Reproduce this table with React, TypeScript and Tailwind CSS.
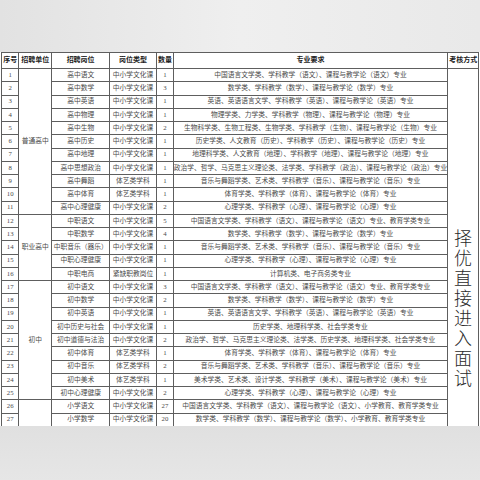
import React from "react";

type Row = [string, string, string, string];

const rows: Row[] = [
  ["高中语文", "中小学文化课", "1", "中国语言文学类、学科教学（语文）、课程与教学论（语文）专业"],
  ["高中数学", "中小学文化课", "3", "数学类、学科教学（数学）、课程与教学论（数学）专业"],
  ["高中英语", "中小学文化课", "1", "英语、英语语言文学、学科教学（英语）、课程与教学论（英语）专业"],
  ["高中物理", "中小学文化课", "1", "物理学类、力学类、学科教学（物理）、课程与教学论（物理）专业"],
  ["高中生物", "中小学文化课", "2", "生物科学类、生物工程类、生物学类、学科教学（生物）、课程与教学论（生物）专业"],
  ["高中历史", "中小学文化课", "1", "历史学类、人文教育（历史）、学科教学（历史）、课程与教学论（历史）专业"],
  ["高中地理", "中小学文化课", "1", "地理科学类、人文教育（地理）、学科教学（地理）、课程与教学论（地理）专业"],
  ["高中思想政治", "中小学文化课", "1", "政治学、哲学、马克思主义理论类、法学类、学科教学（政治）、课程与教学论（政治）专业"],
  ["高中舞蹈", "体艺类学科", "1", "音乐与舞蹈学类、艺术类、学科教学（音乐）、课程与教学论（音乐）专业"],
  ["高中体育", "体艺类学科", "1", "体育学类、学科教学（体育）、课程与教学论（体育）专业"],
  ["高中心理健康", "中小学文化课", "2", "心理学类、学科教学（心理）、课程与教学论（心理）专业"],
  ["中职语文", "中小学文化课", "5", "中国语言文学类、学科教学（语文）、课程与教学论（语文）专业、教育学类专业"],
  ["中职数学", "中小学文化课", "4", "数学类、学科教学（数学）、课程与教学论（数学）专业"],
  ["中职音乐（器乐）", "中小学文化课", "1", "音乐与舞蹈学类、艺术类、学科教学（音乐）、课程与教学论（音乐）专业"],
  ["中职心理健康", "中小学文化课", "1", "心理学类、学科教学（心理）、课程与教学论（心理）专业"],
  ["中职电商", "紧缺职教岗位", "1", "计算机类、电子商务类专业"],
  ["初中语文", "中小学文化课", "3", "中国语言文学类、学科教学（语文）、课程与教学论（语文）专业、教育学类专业"],
  ["初中数学", "中小学文化课", "2", "数学类、学科教学（数学）、课程与教学论（数学）专业"],
  ["初中英语", "中小学文化课", "1", "英语、英语语言文学、学科教学（英语）、课程与教学论（英语）专业"],
  ["初中历史与社会", "中小学文化课", "1", "历史学类、地理科学类、社会学类专业"],
  ["初中道德与法治", "中小学文化课", "2", "政治学、哲学、马克思主义理论类、法学类、历史学类、地理科学类、社会学类专业"],
  ["初中体育", "体艺类学科", "1", "体育学类、学科教学（体育）、课程与教学论（体育）专业"],
  ["初中音乐", "体艺类学科", "2", "音乐与舞蹈学类、艺术类、学科教学（音乐）、课程与教学论（音乐）专业"],
  ["初中美术", "体艺类学科", "1", "美术学类、艺术类、设计学类、学科教学（美术）、课程与教学论（美术）专业"],
  ["初中心理健康", "中小学文化课", "2", "心理学类、学科教学（心理）、课程与教学论（心理）专业"],
  ["小学语文", "中小学文化课", "27", "中国语言文学类、学科教学（语文）、课程与教学论（语文）、小学教育、教育学类专业"],
  ["小学数学", "中小学文化课", "20", "数学类、学科教学（数学）、课程与教学论（数学）、小学教育、教育学类专业"],
];

const units: Record<number, [string, number]> = {
  0: ["普通高中", 11],
  11: ["职业高中", 5],
  16: ["初中", 9],
  25: ["", 2],
};

const td = "border border-[#5e5e5e] p-0 align-middle overflow-hidden";
const inner = "flex justify-center items-center whitespace-nowrap overflow-visible";

export default function App() {
  return (
    <div className="w-[480px] h-[480px] overflow-hidden flex flex-col bg-[#e3e3e3] font-['Liberation_Serif','Noto_Sans_CJK_SC',serif] text-[#4a4a4a]">
      <div className="h-[52px] shrink-0 bg-gradient-to-r from-[#e2e2e2] via-[#efefef] to-[#e9e9e9]" />
      <div className="bg-white h-[374px] shrink-0 pl-px overflow-hidden">
        <table className="table-fixed border-collapse w-[477.3px] text-[6.75px] leading-none">
          <colgroup>
            <col className="w-[17.3px]" />
            <col className="w-[32.7px]" />
            <col className="w-[58.3px]" />
            <col className="w-[46.4px]" />
            <col className="w-[17.6px]" />
            <col className="w-[273.4px]" />
            <col className="w-[31.6px]" />
          </colgroup>
          <thead>
            <tr className="h-[16px] font-bold text-[7px] text-[#222222]">
              <th className={td}><div className={inner}>序号</div></th>
              <th className={td}><div className={inner}>招聘单位</div></th>
              <th className={td}><div className={inner}>招聘岗位</div></th>
              <th className={td}><div className={inner}>岗位类型</div></th>
              <th className={td}><div className={inner}>数量</div></th>
              <th className={td}><div className={inner}>专业要求</div></th>
              <th className={td}><div className="flex justify-end pr-px whitespace-nowrap">考核方式</div></th>
            </tr>
          </thead>
          <tbody>
            {rows.map((r, i) => (
              <tr key={i} className="h-[13.25px]">
                <td className={td}><div className={inner}>{i + 1}</div></td>
                {units[i] !== undefined && (
                  <td className={`${td} border-b-0`} rowSpan={units[i][1]}>
                    <div className={inner}>{units[i][0]}</div>
                  </td>
                )}
                <td className={td}><div className={inner}>{r[0]}</div></td>
                <td className={td}><div className={inner}>{r[1]}</div></td>
                <td className={td}><div className={inner}>{r[2]}</div></td>
                <td className={td}><div className={inner}>{r[3]}</div></td>
                {i === 0 && (
                  <td className="border-x border-[#5e5e5e] p-0 align-top" rowSpan={27}>
                    <div className="flex justify-center pt-[160px]">
                      <span className="[writing-mode:vertical-rl] font-['Noto_Sans_CJK_SC',sans-serif] font-light text-[18px] leading-[20px] tracking-[2px] text-[#2a2a2a]">
                        择优直接进入面试
                      </span>
                    </div>
                  </td>
                )}
              </tr>
            ))}
          </tbody>
        </table>
      </div>
      <div className="flex-1 bg-gradient-to-b from-[#e0e0e0] to-[#e6e6e6]" />
    </div>
  );
}
